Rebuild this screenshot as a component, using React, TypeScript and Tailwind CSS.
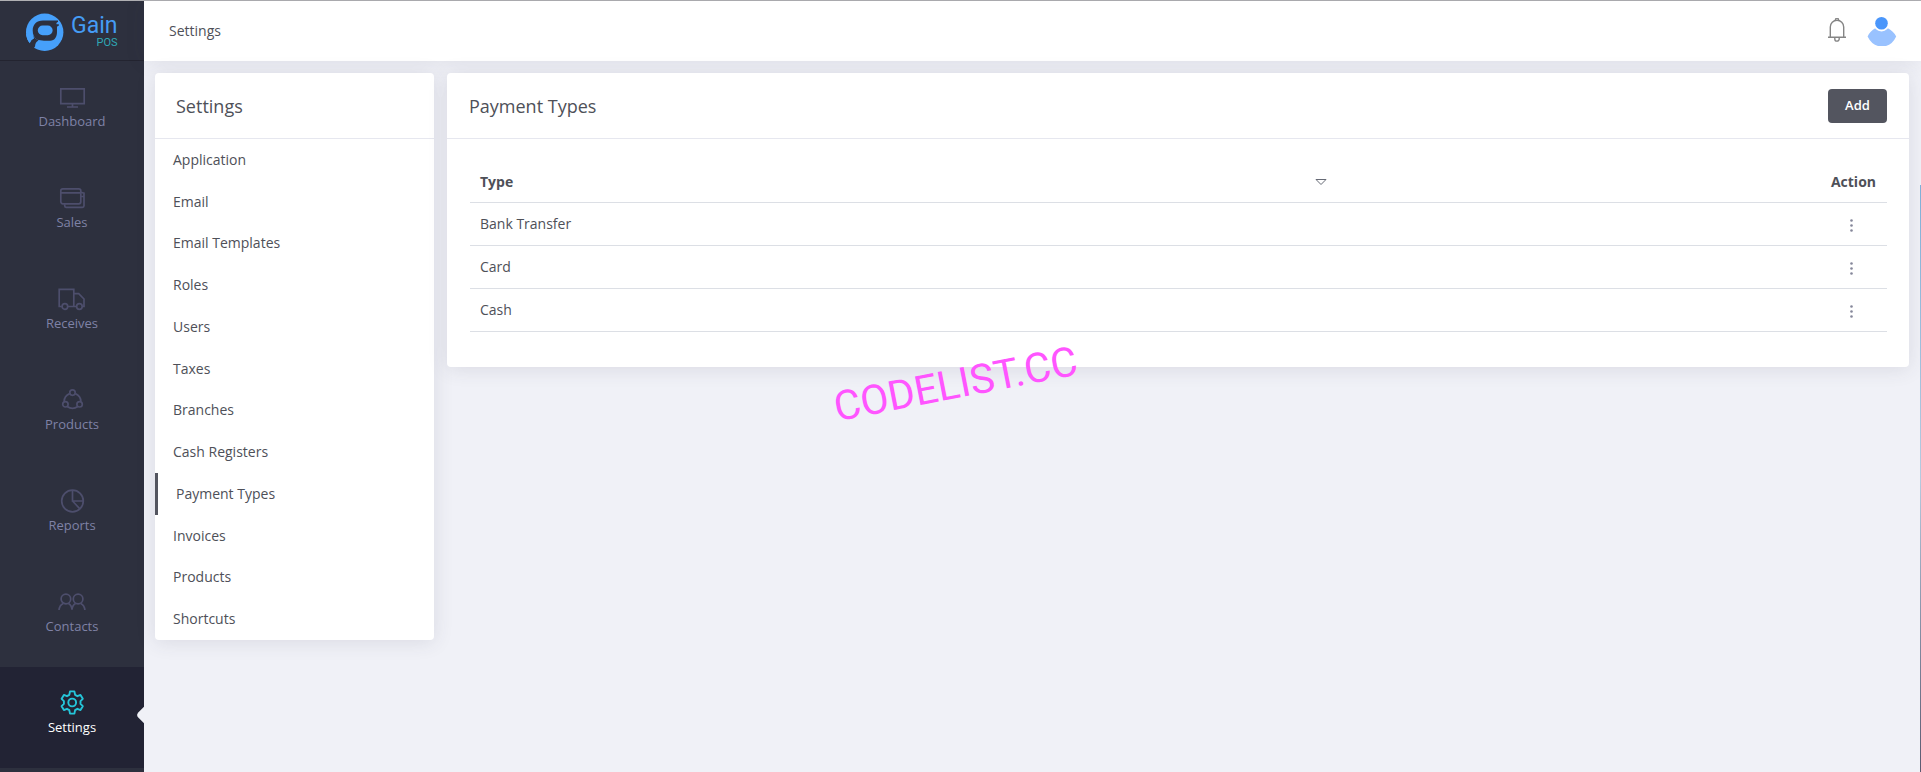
import React from "react";

type IconProps = { className?: string };

const stroke = {
  fill: "none",
  stroke: "currentColor",
  strokeWidth: 1.7,
  "aria-hidden": true,
} as const;

const MonitorIcon = () => (
  <svg width="28" height="28" viewBox="0 0 28 28" {...stroke}>
    <path d="M2.8 5.8h23.400v14.900H2.8zM14.500 21v3M9 24h11" />
  </svg>
);

const WalletIcon = () => (
  <svg width="28" height="28" viewBox="0 0 28 28" {...stroke}>
    <rect x="2.800" y="4.800" width="20" height="15" rx="2" />
    <path d="M3 8.900h19.500M22.800 8.200l3.200 1v12.600a1.600 1.600 0 0 1-1.600 1.600H8.100a1.600 1.600 0 0 1-1.400-1.600v-1.600M22.800 12.500h3" />
  </svg>
);

const TruckIcon = () => (
  <svg width="28" height="28" viewBox="0 0 28 28" {...stroke}>
    <path d="M3.800 21.500H1.200V4.300h14.600v17.200H9.900M15.800 8.600h4.900l5.300 5.400v7.500h-1.600M15.800 21.500h2.600" />
    <circle cx="6.900" cy="21.500" r="2.800" />
    <circle cx="21.400" cy="21.500" r="2.800" />
  </svg>
);

const ProductsIcon = () => (
  <svg width="28" height="28" viewBox="0 0 28 28" {...stroke}>
    <circle cx="14.500" cy="6.600" r="2.700" />
    <circle cx="7.400" cy="18.300" r="2.700" />
    <circle cx="21.600" cy="18.300" r="2.700" />
    <path d="M11.700 7.600a8.900 8.900 0 0 0-5.600 8.100M17.300 7.600a8.900 8.900 0 0 1 5.600 8.100M9.200 20.500a8.900 8.900 0 0 0 10.600 0" />
  </svg>
);

const PieIcon = () => (
  <svg width="28" height="28" viewBox="0 0 28 28" {...stroke}>
    <circle cx="14.500" cy="14" r="10.800" />
    <path d="M14.500 3.200V14h10.800M14.500 14l7.400 7.800" />
  </svg>
);

const ContactsIcon = () => (
  <svg width="28" height="28" viewBox="0 0 28 28" {...stroke}>
    <circle cx="7.900" cy="11" r="4.800" />
    <circle cx="20.100" cy="11" r="4.800" />
    <path d="M1 22c.3-3.300 2-5.500 4.200-6.600M10.400 15.400c2 1 3.300 3.200 3.600 6.200.3-3 1.600-5.200 3.600-6.200M22.800 15.400c2.300 1.100 3.800 3.300 4.100 6.600" />
  </svg>
);

const GearIcon = () => (
  <svg width="28" height="28" viewBox="0 0 28 28" {...stroke} strokeWidth={1.9}>
    <circle cx="14.200" cy="13.500" r="3.900" />
    <path
      strokeLinejoin="round"
      d="M12 2.400h4.400l.7 3.500 2.300 1.300 3.100-1.300 2.300 3.900-2.300 2.300v2.800l2.300 2.300-2.300 3.900-3.100-1.300-2.300 1.300-.7 3.500H12l-.7-3.500L9 19.800l-3.100 1.300-2.300-3.900 2.300-2.300v-2.800l-2.300-2.300 2.300-3.900L9 7.200l2.300-1.300z"
    />
  </svg>
);

const BellIcon = () => (
  <svg width="20" height="26" viewBox="0 0 20 26" fill="none" stroke="currentColor" strokeWidth="1.4" aria-hidden>
    <path d="M3.300 19V9a6.700 6.700 0 0 1 13.400 0v10M1 19.300h18" />
    <path d="M8.600 2.200a1.500 1.500 0 1 1 2.800 0M7.800 19.500v1.400a2.200 2.200 0 0 0 4.400 0v-1.400" />
  </svg>
);

const AvatarIcon = () => (
  <svg width="30" height="30" viewBox="0 0 30 30" aria-hidden>
    <path
      d="M.6 20.500Q3 15 8.500 12Q14.600 16.500 20.500 12Q26.500 15 29.200 20.500Q24.500 30.500 15 30.500T.6 20.500Z"
      fill="#99c2ff"
    />
    <circle cx="14.500" cy="7.200" r="8.200" fill="#fff" />
    <circle cx="14.500" cy="7.200" r="6.300" fill="#4a96fb" />
  </svg>
);

const LogoIcon = () => (
  <svg width="38" height="40" viewBox="0 0 38 40" aria-hidden>
    <circle cx="18.700" cy="19.200" r="18.700" fill="#46a0fb" />
    <path
      d="M32 7.500H17C10.500 7.500 6.700 11.500 6.700 17.500c0 4 1.300 7 4.300 9.200l7 1h6c5 0 7-4 7-8.700v-4.500c0-1 .6-1.600 1.800-1.800v-1.500h-2.300c-.3-1 .3-2 1.500-2.200Z"
      fill="#2d303e"
    />
    <path d="M6.700 20Q7 25 12.500 27.500C10.200 28.500 9.200 30.500 9 33.500L7 36 -1 28Q1.500 30 3.600 29.800 4.500 26.800 8 25.500Z" fill="#2d303e" />
    <path d="M0 20.500Q.5 26.500 3.800 30.300 4.500 27 7.500 25.200L6 21Z" fill="#46a0fb" />
    <rect x="11.800" y="12.500" width="14.800" height="9.700" rx="4.800" fill="#46a0fb" />
  </svg>
);

const NAV: { label: string; Icon: React.FC<IconProps> }[] = [
  { label: "Dashboard", Icon: MonitorIcon },
  { label: "Sales", Icon: WalletIcon },
  { label: "Receives", Icon: TruckIcon },
  { label: "Products", Icon: ProductsIcon },
  { label: "Reports", Icon: PieIcon },
  { label: "Contacts", Icon: ContactsIcon },
  { label: "Settings", Icon: GearIcon },
];

const SECTIONS = [
  "Application",
  "Email",
  "Email Templates",
  "Roles",
  "Users",
  "Taxes",
  "Branches",
  "Cash Registers",
  "Payment Types",
  "Invoices",
  "Products",
  "Shortcuts",
];

const PAYMENT_TYPES = ["Bank Transfer", "Card", "Cash"];

function Sidebar() {
  return (
    <aside className="flex w-36 shrink-0 flex-col bg-[#2d303e]">
      <a href="#home" aria-label="Gain POS" className="flex h-15 items-center border-b border-[#232430] pt-1 pl-[26px]">
        <LogoIcon />
        <span className="ml-[7px] flex flex-col items-end pb-1 font-[Roboto,sans-serif]">
          <span className="text-[23px] leading-6 text-[#459cf5]">Gain</span>
          <span className="text-[11px] leading-[10px] text-[#2fa9b5]">POS</span>
        </span>
      </a>
      <nav>
        {NAV.map(({ label, Icon }) => {
          const active = label === "Settings";
          return (
            <a
              key={label}
              href={"#" + label.toLowerCase()}
              aria-current={active ? "page" : undefined}
              className={
                active
                  ? "relative flex h-[101px] flex-col items-center overflow-hidden bg-[#222334] pt-[22px] text-[#25c5d9]"
                  : "flex h-[101px] flex-col items-center pt-[22px] text-[#4d4e6c]"
              }
            >
              <Icon />
              <span className={active ? "text-[13px] leading-5 text-white" : "text-[13px] leading-5 text-[#7f82a6]"}>
                {label}
              </span>
              {active && (
                <span className="absolute top-[40px] -right-[11px] size-4 rotate-45 rounded-[4px] bg-[#f0f1f7]" />
              )}
            </a>
          );
        })}
      </nav>
    </aside>
  );
}

function Header() {
  return (
    <header className="flex h-15 shrink-0 items-center justify-between bg-white pr-6 pl-[25px] shadow-[0_0_20px_rgba(60,60,80,0.1)]">
      <h1 className="text-sm">Settings</h1>
      <div className="flex items-center gap-5">
        <button type="button" aria-label="Notifications" className="text-[#858585]">
          <BellIcon />
        </button>
        <button type="button" aria-label="Account">
          <AvatarIcon />
        </button>
      </div>
    </header>
  );
}

function SettingsMenu() {
  return (
    <section className="w-[279px] shrink-0 rounded bg-white shadow-[0_2px_20px_rgba(60,60,80,0.12)]">
      <h2 className="flex h-[66px] items-center border-b border-[#e6e7ef] px-[21px] text-lg">Settings</h2>
      <ul className="grid h-[501px] grid-rows-12">
        {SECTIONS.map((name) => (
          <li key={name} className="flex">
            <a
              href={"#" + name.toLowerCase().replace(" ", "-")}
              className={
                name === "Payment Types"
                  ? "flex flex-1 items-center border-l-3 border-[#53555f] px-[18px] text-sm"
                  : "flex flex-1 items-center px-[18px] text-sm"
              }
            >
              {name}
            </a>
          </li>
        ))}
      </ul>
    </section>
  );
}

function PaymentTypes() {
  return (
    <section className="min-w-0 flex-1 rounded bg-white shadow-[0_2px_20px_rgba(60,60,80,0.12)]">
      <div className="flex h-[66px] items-center justify-between border-b border-[#e6e7ef] px-[22px]">
        <h2 className="text-lg">Payment Types</h2>
        <button type="button" className="h-[34px] w-[59px] rounded bg-[#53555f] text-[13px] font-semibold text-white">
          Add
        </button>
      </div>
      <div className="pt-[22px] pr-[22px] pb-[35px] pl-[23px]">
        <table className="w-full border-collapse text-left text-sm">
          <thead>
            <tr className="h-[41px] border-b border-[#dcdfe5]">
              <th className="pt-0.5 pl-[10px] font-bold">
                <button type="button" className="flex w-full items-center text-left">
                  <span className="w-[835px]">Type</span>
                  <svg width="12" height="8" viewBox="0 0 12 8" fill="none" stroke="#666a75" aria-hidden>
                    <path d="M1 1.500h10L6 6.500z" />
                  </svg>
                </button>
              </th>
              <th className="w-20 pt-0.5 pr-[11px] text-right font-bold">Action</th>
            </tr>
          </thead>
          <tbody>
            {PAYMENT_TYPES.map((type) => (
              <tr key={type} className="h-[43px] border-b border-[#dcdfe5]">
                <td className="pl-[10px]">{type}</td>
                <td className="pr-[33px]">
                  <button type="button" aria-label={"Actions for " + type} className="ml-auto block">
                    <svg width="5" height="16" viewBox="0 0 5 16" fill="#85879a" aria-hidden>
                      <circle cx="2.500" cy="4.500" r="1.300" />
                      <circle cx="2.500" cy="9.500" r="1.300" />
                      <circle cx="2.500" cy="14.500" r="1.300" />
                    </svg>
                  </button>
                </td>
              </tr>
            ))}
          </tbody>
        </table>
      </div>
    </section>
  );
}

export default function App() {
  return (
    <div className="relative flex min-h-screen border-t border-[#b0b0b3] bg-[#f0f1f7] font-['Open_Sans',sans-serif] text-[#4e5058]">
      <Sidebar />
      <div className="flex min-w-0 flex-1 flex-col">
        <Header />
        <main className="flex items-start gap-[13px] py-3 pr-3 pl-[11px]">
          <SettingsMenu />
          <PaymentTypes />
        </main>
      </div>
      <div className="absolute top-[358px] left-[832px] -rotate-[11deg] font-[Roboto,sans-serif] text-[41px] leading-[50px] text-[#ff55ff]">
        CODELIST.CC
      </div>
      <div className="absolute top-[184px] right-0 bottom-0 w-px bg-linear-to-b from-[#7fb0d8] via-[#b5cbe0] to-[#5a5a70]" />
    </div>
  );
}
